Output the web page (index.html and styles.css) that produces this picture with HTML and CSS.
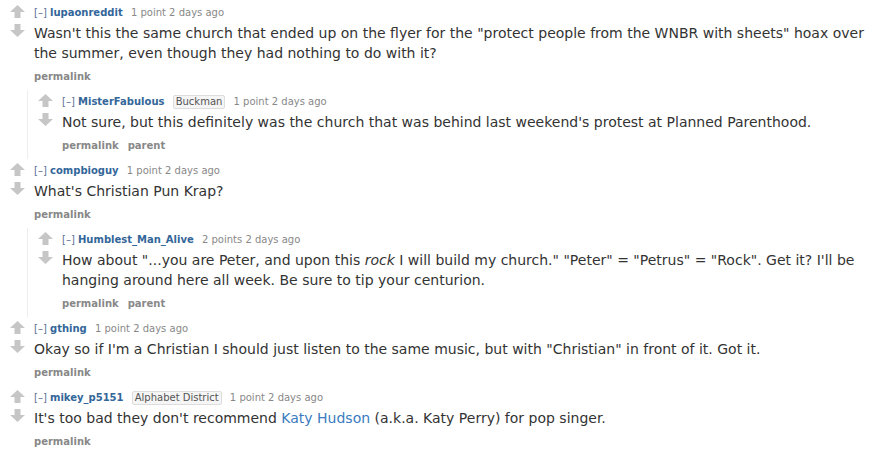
FILE: index.html
```html
<!DOCTYPE html>
<html>
<head>
<meta charset="utf-8">
<link rel="stylesheet" href="styles.css">
</head>
<body>
<div class="thread">

  <div class="comment">
    <div class="row">
      <div class="midcol">
        <svg class="arrow" viewBox="0 0 15 13" width="15" height="13"><polygon points="7.5,0 15,7 10.5,7 10.5,13 4.5,13 4.5,7 0,7"/></svg>
        <svg class="arrow down" viewBox="0 0 15 13" width="15" height="13"><polygon points="7.5,13 15,6 10.5,6 10.5,0 4.5,0 4.5,6 0,6"/></svg>
      </div>
      <div class="entry">
        <p class="tagline"><span class="expand">[–]</span> <span class="author">lupaonreddit</span> <span class="score">1 point</span> <span class="time">2 days ago</span></p>
        <div class="md"><p>Wasn't this the same church that ended up on the flyer for the "protect people from the WNBR with sheets" hoax over the summer, even though they had nothing to do with it?</p></div>
        <ul class="buttons"><li>permalink</li></ul>
      </div>
    </div>
    <div class="child">
      <div class="comment">
        <div class="row">
          <div class="midcol">
            <svg class="arrow" viewBox="0 0 15 13" width="15" height="13"><polygon points="7.5,0 15,7 10.5,7 10.5,13 4.5,13 4.5,7 0,7"/></svg>
            <svg class="arrow down" viewBox="0 0 15 13" width="15" height="13"><polygon points="7.5,13 15,6 10.5,6 10.5,0 4.5,0 4.5,6 0,6"/></svg>
          </div>
          <div class="entry">
            <p class="tagline"><span class="expand">[–]</span> <span class="author">MisterFabulous</span> <span class="flair">Buckman</span> <span class="score">1 point</span> <span class="time">2 days ago</span></p>
            <div class="md"><p>Not sure, but this definitely was the church that was behind last weekend's protest at Planned Parenthood.</p></div>
            <ul class="buttons"><li>permalink</li><li>parent</li></ul>
          </div>
        </div>
      </div>
    </div>
  </div>

  <div class="comment">
    <div class="row">
      <div class="midcol">
        <svg class="arrow" viewBox="0 0 15 13" width="15" height="13"><polygon points="7.5,0 15,7 10.5,7 10.5,13 4.5,13 4.5,7 0,7"/></svg>
        <svg class="arrow down" viewBox="0 0 15 13" width="15" height="13"><polygon points="7.5,13 15,6 10.5,6 10.5,0 4.5,0 4.5,6 0,6"/></svg>
      </div>
      <div class="entry">
        <p class="tagline"><span class="expand">[–]</span> <span class="author">compbioguy</span> <span class="score">1 point</span> <span class="time">2 days ago</span></p>
        <div class="md"><p>What's Christian Pun Krap?</p></div>
        <ul class="buttons"><li>permalink</li></ul>
      </div>
    </div>
    <div class="child">
      <div class="comment">
        <div class="row">
          <div class="midcol">
            <svg class="arrow" viewBox="0 0 15 13" width="15" height="13"><polygon points="7.5,0 15,7 10.5,7 10.5,13 4.5,13 4.5,7 0,7"/></svg>
            <svg class="arrow down" viewBox="0 0 15 13" width="15" height="13"><polygon points="7.5,13 15,6 10.5,6 10.5,0 4.5,0 4.5,6 0,6"/></svg>
          </div>
          <div class="entry">
            <p class="tagline"><span class="expand">[–]</span> <span class="author">Humblest_Man_Alive</span> <span class="score">2 points</span> <span class="time">2 days ago</span></p>
            <div class="md"><p>How about "...you are Peter, and upon this <em>rock</em> I will build my church." "Peter" = "Petrus" = "Rock". Get it? I'll be hanging around here all week. Be sure to tip your centurion.</p></div>
            <ul class="buttons"><li>permalink</li><li>parent</li></ul>
          </div>
        </div>
      </div>
    </div>
  </div>

  <div class="comment">
    <div class="row">
      <div class="midcol">
        <svg class="arrow" viewBox="0 0 15 13" width="15" height="13"><polygon points="7.5,0 15,7 10.5,7 10.5,13 4.5,13 4.5,7 0,7"/></svg>
        <svg class="arrow down" viewBox="0 0 15 13" width="15" height="13"><polygon points="7.5,13 15,6 10.5,6 10.5,0 4.5,0 4.5,6 0,6"/></svg>
      </div>
      <div class="entry">
        <p class="tagline"><span class="expand">[–]</span> <span class="author">gthing</span> <span class="score">1 point</span> <span class="time">2 days ago</span></p>
        <div class="md"><p>Okay so if I'm a Christian I should just listen to the same music, but with "Christian" in front of it. Got it.</p></div>
        <ul class="buttons"><li>permalink</li></ul>
      </div>
    </div>
  </div>

  <div class="comment">
    <div class="row">
      <div class="midcol">
        <svg class="arrow" viewBox="0 0 15 13" width="15" height="13"><polygon points="7.5,0 15,7 10.5,7 10.5,13 4.5,13 4.5,7 0,7"/></svg>
        <svg class="arrow down" viewBox="0 0 15 13" width="15" height="13"><polygon points="7.5,13 15,6 10.5,6 10.5,0 4.5,0 4.5,6 0,6"/></svg>
      </div>
      <div class="entry">
        <p class="tagline"><span class="expand">[–]</span> <span class="author">mikey_p5151</span> <span class="flair">Alphabet District</span> <span class="score">1 point</span> <span class="time">2 days ago</span></p>
        <div class="md"><p>It's too bad they don't recommend <a class="link" href="#">Katy Hudson</a> (a.k.a. Katy Perry) for pop singer.</p></div>
        <ul class="buttons"><li>permalink</li></ul>
      </div>
    </div>
  </div>

</div>
</body>
</html>
```

FILE: styles.css
```css
html, body {
  margin: 0;
  padding: 0;
  background: #ffffff;
}

body {
  font-family: "DejaVu Sans", Verdana, sans-serif;
  color: #333333;
}

.thread {
  padding: 1px 8px 0 10px;
}

.comment {
  padding-top: 5px;
}

.row {
  display: flex;
  align-items: flex-start;
}

.midcol {
  width: 15px;
  flex: none;
  display: flex;
  flex-direction: column;
  gap: 6px;
  margin-top: -1px;
}

.arrow {
  display: block;
  fill: #c6c6c6;
}

.entry {
  margin-left: 9px;
  padding-bottom: 6px;
  flex: 1;
  min-width: 0;
}

.tagline {
  margin: 0;
  font-size: 10px;
  line-height: 14px;
  color: #888888;
  white-space: nowrap;
}

.expand {
  color: #5a6f99;
}

.author {
  color: #336699;
  font-weight: bold;
  margin-right: 5px;
}

.flair {
  display: inline-block;
  background: #f5f5f5;
  border: 1px solid #dddddd;
  border-radius: 2px;
  color: #545454;
  padding: 0 2px;
  line-height: 12px;
  margin-right: 5px;
}

.md {
  max-width: 840px;
  font-size: 14px;
  line-height: 20px;
  margin-top: 3px;
}

.md p {
  margin: 0;
}

.link {
  color: #3a7bc0;
  text-decoration: none;
}

.buttons {
  list-style: none;
  margin: 7px 0 0;
  padding: 0;
  display: flex;
  gap: 9px;
  font-size: 10px;
  line-height: 14px;
  font-weight: bold;
  color: #888888;
}

.child {
  margin-left: 17px;
  border-left: 1px solid #eeeeee;
  padding-left: 10px;
}
```
